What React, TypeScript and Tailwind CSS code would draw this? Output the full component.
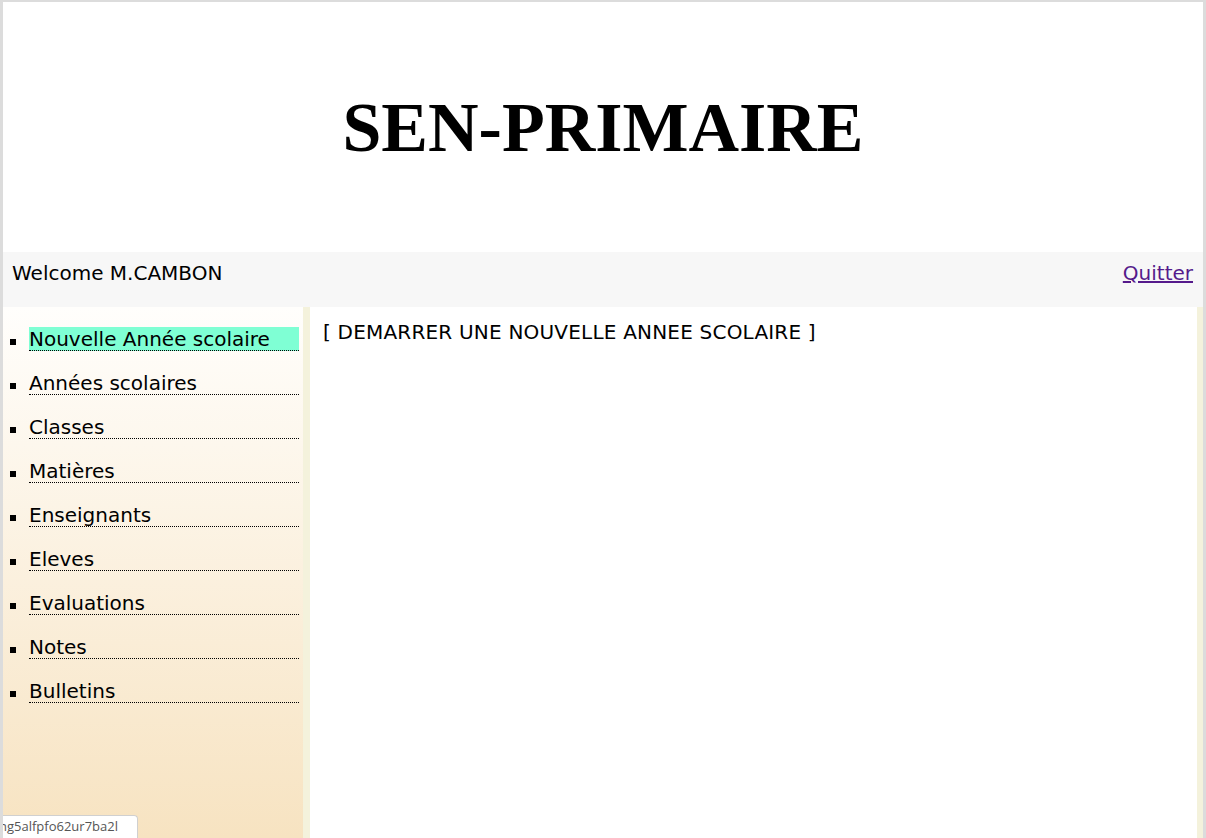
import React from 'react';

const menuItems = [
  'Nouvelle Année scolaire',
  'Années scolaires',
  'Classes',
  'Matières',
  'Enseignants',
  'Eleves',
  'Evaluations',
  'Notes',
  'Bulletins',
];

const App = () => {
  return (
    <div className="relative h-[838px] overflow-hidden bg-white border-l-[3px] border-r-[3px] border-t-2 border-[#dcdcdc] flex flex-col font-['DejaVu_Sans',sans-serif] text-black">
      {/* Header */}
      <header className="h-[250px] shrink-0 flex items-center justify-center">
        <h1 className="font-['Liberation_Serif',serif] font-bold text-[70px] leading-none mt-[2px]">SEN-PRIMAIRE</h1>
      </header>

      {/* Welcome bar */}
      <div className="h-[55px] shrink-0 bg-[#f7f7f7] flex items-start justify-between pt-[10px] pl-[9px] pr-[10px] text-[20px] leading-[23px]">
        <span>Welcome M.CAMBON</span>
        <a href="#" className="underline text-[#551a8b]">Quitter</a>
      </div>

      {/* Body */}
      <div className="flex flex-1 min-h-0">
        <aside className="w-[300px] shrink-0 bg-gradient-to-b from-[#fffefc] to-[#f7e3c1] pt-5 pr-1">
          <ul className="flex flex-col gap-5">
            {menuItems.map((item, i) => (
              <li key={item} className="flex items-start">
                <span className="w-[6px] h-[6px] bg-black mt-[12px] ml-[7px] mr-[13px] shrink-0" />
                <a
                  href="#"
                  className={`flex-1 block text-[20px] leading-[21px] pt-[2px] border-b border-dotted border-black ${i === 0 ? 'bg-[#7fffd4]' : ''}`}
                >
                  {item}
                </a>
              </li>
            ))}
          </ul>
        </aside>
        <div className="w-[7px] shrink-0 bg-[#f4f2dc]" />
        <main className="flex-1 pl-[13px] pt-[10px] text-[20px] tracking-[0.2px]">
          <p>[ DEMARRER UNE NOUVELLE ANNEE SCOLAIRE ]</p>
        </main>
        <div className="w-[6px] shrink-0 bg-[#f4f2dc]" />
      </div>

      {/* Browser status bubble */}
      <div className="absolute left-[-3px] bottom-0 h-[23px] w-[138px] bg-white border-t border-r border-[#d0d0d0] rounded-tr-[4px] flex items-center overflow-hidden">
        <span className="font-['Open_Sans',sans-serif] text-[13px] text-[#555] whitespace-nowrap ml-[-1px]">ng5alfpfo62ur7ba2l</span>
      </div>
    </div>
  );
};

export default App;
